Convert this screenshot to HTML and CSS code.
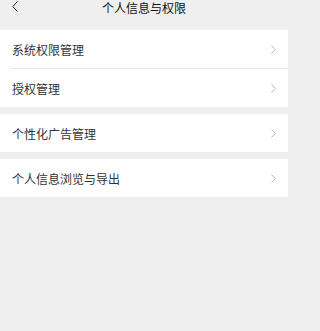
FILE: index.html
```html
<!DOCTYPE html>
<html lang="zh-CN">
<head>
<meta charset="utf-8">
<link rel="stylesheet" href="styles.css">
</head>
<body>
<div class="page">
  <header class="topbar">
    <svg class="back" width="6" height="11" viewBox="0 0 6 11"><path d="M5.5 0.5 L0.8 5.5 L5.5 10.5" fill="none" stroke="#222" stroke-width="1"/></svg>
    <div class="title">个人信息与权限</div>
  </header>
  <section class="group">
    <div class="row"><span>系统权限管理</span><svg class="chev" width="5" height="9" viewBox="0 0 5 9"><path d="M0.5 0.5 L4.3 4.5 L0.5 8.5" fill="none" stroke="#b8b8b8" stroke-width="1"/></svg></div>
    <div class="row"><span>授权管理</span><svg class="chev" width="5" height="9" viewBox="0 0 5 9"><path d="M0.5 0.5 L4.3 4.5 L0.5 8.5" fill="none" stroke="#b8b8b8" stroke-width="1"/></svg></div>
  </section>
  <section class="group">
    <div class="row"><span>个性化广告管理</span><svg class="chev" width="5" height="9" viewBox="0 0 5 9"><path d="M0.5 0.5 L4.3 4.5 L0.5 8.5" fill="none" stroke="#b8b8b8" stroke-width="1"/></svg></div>
  </section>
  <section class="group">
    <div class="row"><span>个人信息浏览与导出</span><svg class="chev" width="5" height="9" viewBox="0 0 5 9"><path d="M0.5 0.5 L4.3 4.5 L0.5 8.5" fill="none" stroke="#b8b8b8" stroke-width="1"/></svg></div>
  </section>
</div>
</body>
</html>
```
FILE: styles.css
```css
html, body {
  margin: 0;
  padding: 0;
  background: #efefef;
}
body {
  font-family: "Noto Sans CJK SC", "Noto Sans", sans-serif;
  color: #222;
  width: 291px;
  height: 331px;
  overflow: hidden;
}
.page {
  display: flex;
  flex-direction: column;
  gap: 7px;
  margin-right: 3px;
}
.topbar {
  position: relative;
  height: 23px;
  display: flex;
  align-items: flex-start;
  justify-content: center;
}
.back {
  position: absolute;
  left: 12px;
  top: 1px;
}
.title {
  font-size: 12px;
  line-height: 15px;
  font-weight: 400;
  color: #111;
}
.group {
  background: #fff;
  display: flex;
  flex-direction: column;
}
.row {
  height: 38px;
  display: flex;
  align-items: center;
  justify-content: space-between;
  padding: 0 12px;
  font-size: 12px;
  color: #333;
}
.row + .row {
  border-top: 1px solid #e6e6e6;
  margin-left: 11px;
  padding-left: 1px;
}
.chev {
  display: block;
}
```
